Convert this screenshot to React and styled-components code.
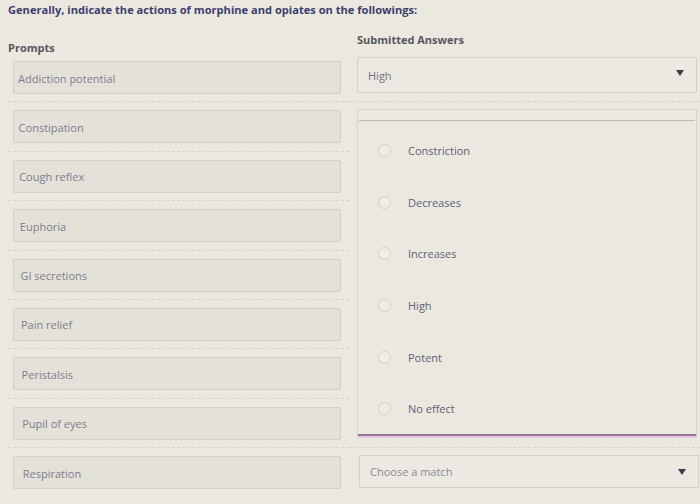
import React from 'react';
import styled, { createGlobalStyle } from 'styled-components';

const GlobalStyle = createGlobalStyle`
  html, body {
    margin: 0;
    padding: 0;
    background: #ebe8e0;
  }
  body {
    font-family: 'Open Sans', 'Noto Sans', sans-serif;
  }
`;

const Page = styled.div`
  width: 700px;
  height: 504px;
  overflow: hidden;
  padding-left: 8px;
  box-sizing: border-box;
  background: #ebe8e0;
`;

const Title = styled.div`
  padding-top: 2px;
  height: 23px;
  font-size: 11.1px;
  font-weight: 700;
  color: #3d3f6d;
`;

const Grid = styled.div`
  display: grid;
  grid-template-columns: 341px 351px;
  grid-template-rows: 28px repeat(9, 49.4px);
`;

const Heading = styled.div`
  font-size: 11px;
  font-weight: 700;
  color: #56565e;
  padding-top: ${(p) => p.$top}px;
  padding-left: ${(p) => p.$left}px;
`;

const Cell = styled.div`
  box-sizing: border-box;
  padding: 8px 0 0 ${(p) => p.$left || 0}px;
  border-bottom: ${(p) => (p.$last ? 'none' : '1px dashed #d6d3ca')};
  grid-column: ${(p) => p.$col};
  grid-row: ${(p) => p.$row};
`;

const PromptBox = styled.div`
  box-sizing: border-box;
  margin-left: 5px;
  width: 328px;
  height: 33px;
  display: flex;
  align-items: center;
  padding-left: ${(p) => 4 + p.$shift}px;
  padding-top: 1px;
  font-size: 11px;
  color: #7d7d8c;
  background: #e4e1d9;
  border: 1px solid #d1cec6;
  border-radius: 2px;
`;

const Select = styled.div`
  box-sizing: border-box;
  width: 340px;
  height: ${(p) => p.$h}px;
  margin-top: ${(p) => p.$mt}px;
  display: flex;
  align-items: ${(p) => (p.$top ? 'flex-start' : 'center')};
  justify-content: space-between;
  padding: ${(p) => (p.$top ? '10px 12px 0 10px' : '0 12px 0 10px')};
  font-size: 11px;
  color: ${(p) => p.$color};
  background: #ece9e2;
  border: 1px solid #d3d0c8;
  border-radius: 2px;
`;

const Arrow = styled.span`
  width: 0;
  height: 0;
  margin-top: ${(p) => p.$mt || 0}px;
  border-left: 4px solid transparent;
  border-right: 4px solid transparent;
  border-top: 6px solid #3c3c48;
`;

const PanelCell = styled.div`
  grid-column: 2;
  grid-row: 3 / 10;
  box-sizing: border-box;
  padding: 7px 3px 11px 8px;
  border-bottom: 1px dashed #d6d3ca;
`;

const Panel = styled.div`
  box-sizing: border-box;
  height: 100%;
  background: #ebe8e0;
  border: 1px solid #d6d3cb;
  border-bottom: 2px solid #94759f;
  box-shadow: 0 2px 1px #e5c3df;
  border-radius: 2px;
  display: flex;
  flex-direction: column;
`;

const PanelTop = styled.div`
  height: 10px;
  border-bottom: 1px solid #bdbab3;
  margin: 0 1px;
`;

const Options = styled.div`
  flex: 1;
  display: flex;
  flex-direction: column;
  padding: 20px 0 0 20px;
  gap: 33.7px;
`;

const Option = styled.div`
  display: flex;
  align-items: center;
  height: 18px;
  font-size: 11px;
  color: #5e5f78;
`;

const Radio = styled.span`
  width: 11px;
  height: 11px;
  border-radius: 50%;
  border: 1px solid #d2d0c9;
  background: #eeece6;
  margin-right: 17px;
  flex-shrink: 0;
`;

const prompts = [
  'Addiction potential',
  'Constipation',
  'Cough reflex',
  'Euphoria',
  'GI secretions',
  'Pain relief',
  'Peristalsis',
  'Pupil of eyes',
  'Respiration',
];

const options = ['Constriction', 'Decreases', 'Increases', 'High', 'Potent', 'No effect'];

export default function App() {
  return (
    <Page>
      <GlobalStyle />
      <Title>Generally, indicate the actions of morphine and opiates on the followings:</Title>
      <Grid>
        <Heading $top={15} $left={0}>Prompts</Heading>
        <Heading $top={7} $left={8}>Submitted Answers</Heading>
        {prompts.map((p, i) => (
          <Cell key={p} $col={1} $row={i + 2} $last={i === prompts.length - 1}>
            <PromptBox $shift={i * 0.6}>{p}</PromptBox>
          </Cell>
        ))}
        <Cell $col={2} $row={2} $left={8}>
          <Select $h={36} $mt={-4} $top $color="#6f6f80">
            High
            <Arrow $mt={2} />
          </Select>
        </Cell>
        <PanelCell>
          <Panel>
            <PanelTop />
            <Options>
              {options.map((o) => (
                <Option key={o}>
                  <Radio />
                  {o}
                </Option>
              ))}
            </Options>
          </Panel>
        </PanelCell>
        <Cell $col={2} $row={10} $left={10} $last>
          <Select $h={33} $mt={-1} $color="#8a8a96">
            Choose a match
            <Arrow />
          </Select>
        </Cell>
      </Grid>
    </Page>
  );
}
